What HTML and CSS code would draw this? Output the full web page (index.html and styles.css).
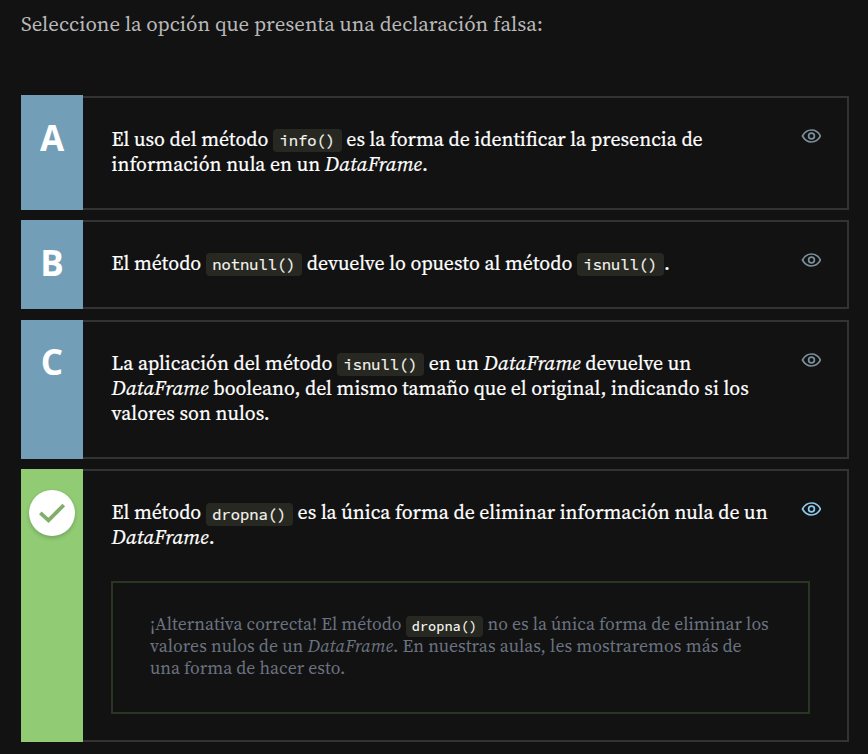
FILE: index.html
```html
<!DOCTYPE html>
<html lang="es">
<head>
<meta charset="utf-8">
<title>Ejercicio</title>
<link rel="stylesheet" href="styles.css">
</head>
<body>
<svg class="defs" width="0" height="0">
  <symbol id="eye" viewBox="-0.5 0 20 16">
    <path d="M1 8C3 4.200 6.200 2 10 2s7 2.200 9 6c-2 3.800-5.200 6-9 6S3 11.800 1 8Z"/>
    <circle cx="10" cy="8" r="2.900"/>
  </symbol>
</svg>
<main class="exercise">
  <p class="question"><span class="line">Seleccione la opción que presenta una declaración falsa:</span></p>
  <ul class="options">
    <li class="option first">
      <div class="badge">A</div>
      <div class="body">
        <p class="text"><span class="line">El uso del método <code>info()</code> es la forma de identificar la presencia de</span>
        <span class="line">información nula en un <em>DataFrame</em>.</span></p>
        <svg class="eye"><use href="#eye"/></svg>
      </div>
    </li>
    <li class="option second">
      <div class="badge">B</div>
      <div class="body">
        <p class="text"><span class="line">El método <code>notnull()</code> devuelve lo opuesto al método <code>isnull()</code>.</span></p>
        <svg class="eye"><use href="#eye"/></svg>
      </div>
    </li>
    <li class="option third">
      <div class="badge">C</div>
      <div class="body">
        <p class="text"><span class="line">La aplicación del método <code>isnull()</code> en un <em>DataFrame</em> devuelve un</span>
        <span class="line"><em>DataFrame</em> booleano, del mismo tamaño que el original, indicando si los</span>
        <span class="line">valores son nulos.</span></p>
        <svg class="eye"><use href="#eye"/></svg>
      </div>
    </li>
    <li class="option correct">
      <div class="badge"><span class="check"><svg width="26" height="20" viewBox="0 0 26 20"><path d="M1.300 9.800 9.500 17.300 24.800 2"/></svg></span></div>
      <div class="body">
        <p class="text"><span class="line">El método <code>dropna()</code> es la única forma de eliminar información nula de un</span>
        <span class="line"><em>DataFrame</em>.</span></p>
        <svg class="eye active"><use href="#eye"/></svg>
        <p class="feedback"><span class="line">¡Alternativa correcta! El método <code>dropna()</code> no es la única forma de eliminar los</span>
        <span class="line wide">valores nulos de un <em>DataFrame</em>. En nuestras aulas, les mostraremos más de</span>
        <span class="line">una forma de hacer esto.</span></p>
      </div>
    </li>
  </ul>
</main>
</body>
</html>
```
FILE: styles.css
```css
* { box-sizing: border-box; }
body {
  margin: 0;
  background: #121212;
  color: #fff;
  font-family: "Source Serif Pro", "Source Serif 4", "Liberation Serif", serif;
}
.defs { position: absolute; }
.exercise { padding: 11px 19px 0 21px; }
p { margin: 0; }
.question {
  height: 84px;
  color: #b9b9b9;
  font-size: 20.820px;
  line-height: 25px;
}
.line { display: block; width: max-content; white-space: nowrap; }
.options {
  list-style: none;
  margin: 0;
  padding: 0;
  display: flex;
  flex-direction: column;
}
.option { display: grid; grid-template-columns: 62px 1fr; }
.first { height: 115px; margin-bottom: 10px; }
.second { height: 89px; margin-bottom: 11px; }
.third { height: 139px; margin-bottom: 10px; }
.correct { height: 273px; }
.badge {
  background: #729fb7;
  font: 700 35px/48px "Open Sans", sans-serif;
  text-align: center;
  padding-top: 19px;
}
.third .badge { padding-top: 18px; }
.correct .badge { background: #91cb74; padding-top: 21px; }
.check {
  display: flex;
  align-items: center;
  justify-content: center;
  width: 46px;
  height: 46px;
  margin: 0 auto;
  border-radius: 50%;
  background: #fff;
  box-shadow: 0 2px 4px rgba(0, 0, 0, .2);
}
.check path { fill: none; stroke: #81af6b; stroke-width: 3.800; }
.body {
  display: grid;
  grid-template-columns: 1fr 20px;
  align-content: start;
  border: 2px solid #333;
  border-left: 0;
  padding: 29px 26px 0 28.500px;
}
.first .body { margin-top: 1px; }
.text { font-size: 19.800px; line-height: 25px; -webkit-text-stroke: .2px; }
.text em { font-size: 20.700px; line-height: 0; }
code {
  padding: 2px 6.800px 2px 6.500px;
  border-radius: 4px;
  background: #272822;
  color: #f8f8f2;
  font: 15.400px/0 "Source Code Pro", "Liberation Mono", monospace;
}
.correct code { position: relative; top: 1px; }
.eye {
  width: 20px;
  height: 16px;
  margin-top: 1px;
  fill: none;
  stroke: #7b8f9b;
  stroke-width: 1.700;
}
.eye.active { stroke: #8bcaed; }
.feedback {
  grid-column: 1 / -1;
  width: 699px;
  height: 133px;
  margin: 31px 0 0 -.5px;
  padding: 30px 37px 0;
  border: 2px solid #2a3624;
  color: #6b7280;
  font-size: 17.680px;
  line-height: 22px;
}
.feedback em { font-size: 18.200px; line-height: 0; }
.wide { letter-spacing: .035px; }
.feedback code {
  padding: 2px 6.300px;
  font-size: 13.600px;
  font-weight: 500;
}
```
